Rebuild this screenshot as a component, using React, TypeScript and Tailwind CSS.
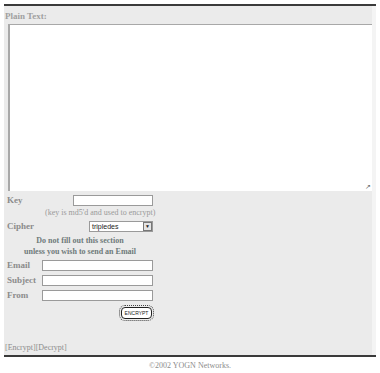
import React from 'react';

const label = 'text-[9px] font-bold text-[#8c8c8c] leading-none';
const field = 'h-[11px] border border-[#9a9a9a] bg-white';

const App: React.FC = () => {
  return (
    <div className="w-[380px] h-[373px] bg-white font-['Liberation_Serif',serif] text-[#8c8c8c]">
      <div className="pt-[4px] px-[4px]">
        <div className="border-t-2 border-b-2 border-[#3a3a3a] flex">
          <div className="w-[368px] h-[349px] bg-[#ebebeb] flex flex-col">
            <div className="pt-[6px] pl-[1px] h-[18px] text-[9px] font-bold text-[#a0a0a0] leading-none">Plain Text:</div>
            <div className="pl-[4px]">
              <div className="w-[364px] h-[167px] bg-white border-l-2 border-t border-[#a8a8a8] flex items-end justify-end">
                <span className="text-[7px] text-[#666] pr-[1px] leading-none">&#x2197;</span>
              </div>
            </div>
            <div className="flex items-center mt-[4px] h-[11px]">
              <span className={`${label} pl-[3px] w-[69px]`}>Key</span>
              <div className={`${field} w-[80px]`} />
            </div>
            <div className="pl-[41px] mt-[3px] text-[8px] leading-none text-[#9a9a9a]">(key is md5'd and used to encrypt)</div>
            <div className="flex items-center mt-[4px] h-[11px]">
              <span className={`${label} pl-[3px] w-[85px]`}>Cipher</span>
              <div className={`${field} w-[64px] flex items-center justify-between`}>
                <span className="text-[7px] pl-[2px] text-[#222] font-['Liberation_Sans',sans-serif] leading-none">tripledes</span>
                <span className="w-[9px] h-[9px] border border-[#777] bg-[#e4e4e4] text-[5px] leading-[7px] text-center text-[#222]">&#9660;</span>
              </div>
            </div>
            <div className="w-[152px] text-center mt-[3px] text-[8px] font-bold leading-[11px] text-[#6e7a7a]">
              <div>Do not fill out this section</div>
              <div>unless you wish to send an Email</div>
            </div>
            <div className="flex items-center mt-[3px] h-[11px]">
              <span className={`${label} pl-[3px] w-[38px]`}>Email</span>
              <div className={`${field} w-[111px]`} />
            </div>
            <div className="flex items-center mt-[4px] h-[11px]">
              <span className={`${label} pl-[3px] w-[38px]`}>Subject</span>
              <div className={`${field} w-[111px]`} />
            </div>
            <div className="flex items-center mt-[4px] h-[11px]">
              <span className={`${label} pl-[3px] w-[38px]`}>From</span>
              <div className={`${field} w-[111px]`} />
            </div>
            <div className="flex justify-end w-[148px] mt-[6px]">
              <button className="h-[12px] w-[31px] px-0 border border-[#222] rounded-[4px] bg-white text-[5px] leading-none text-[#222] font-['Liberation_Sans',sans-serif] outline outline-1 outline-offset-[1px] outline-dotted outline-[#444]">
                ENCRYPT
              </button>
            </div>
            <div className="mt-auto pb-[3px] pl-[1px] text-[8px] leading-none text-[#8c8c8c]">
              [Encrypt][Decrypt]
            </div>
          </div>
          <div className="flex-1 bg-[#f4f4f4]" />
        </div>
        <div className="text-center text-[8px] leading-none mt-[5px] text-[#8c8c8c]">&copy;2002 YOGN Networks.</div>
      </div>
    </div>
  );
};

export default App;
